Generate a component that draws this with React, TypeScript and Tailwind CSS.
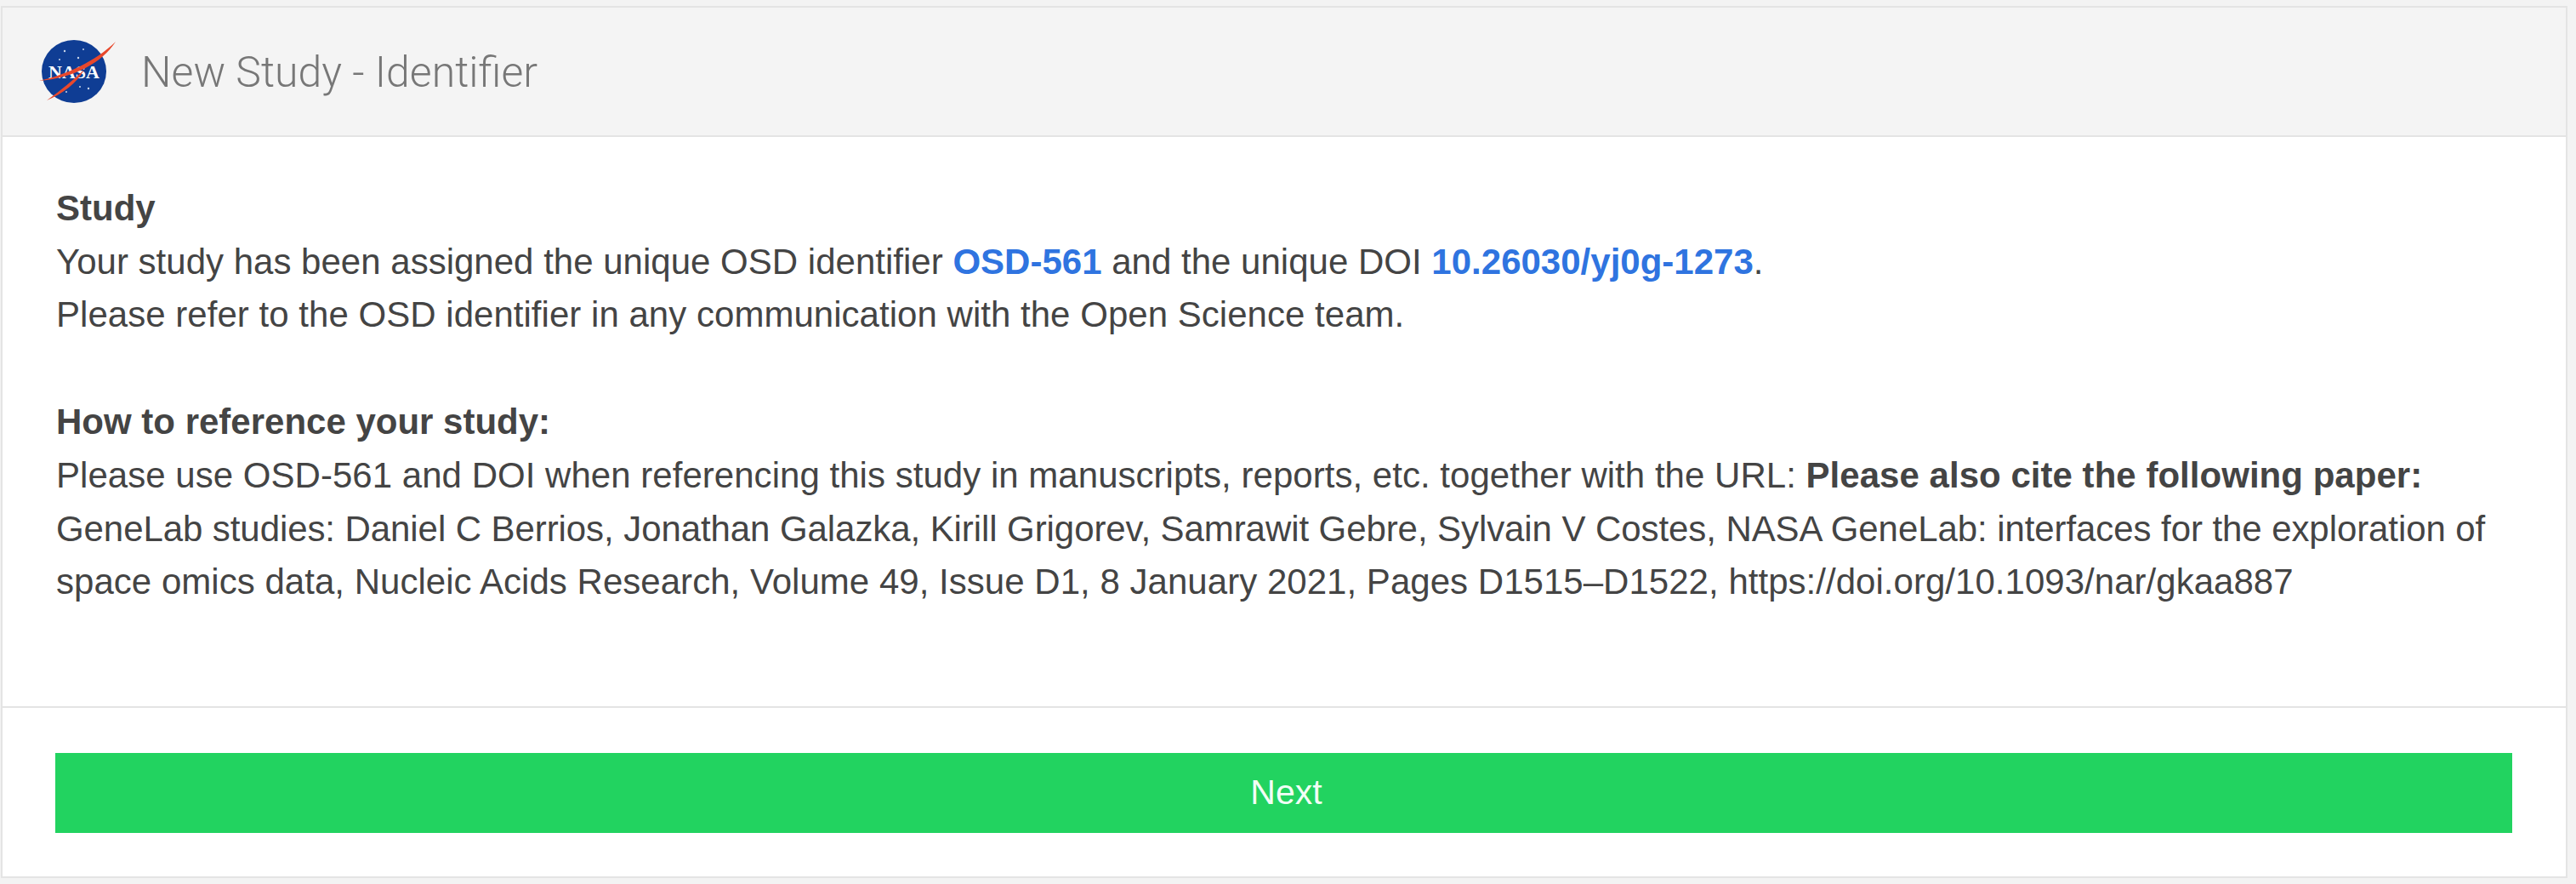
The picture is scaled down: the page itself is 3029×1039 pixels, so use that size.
const App = () => {
  return (
    <div className="w-[3029px] h-[1039px] bg-[#f3f3f3] pt-[7px] pl-px pr-[10px] pb-[7px] font-['Liberation_Sans',Arial,sans-serif]">
      <div className="h-full flex flex-col bg-white border-2 border-[#e4e4e4]">
        <div className="h-[152px] shrink-0 flex items-center pl-[43px] bg-[#f4f4f4] border-b-2 border-[#e4e4e4]">
          <svg width="92" height="76" viewBox="0 0 92 76" className="shrink-0">
            <ellipse cx="41" cy="38" rx="38" ry="37" fill="#0f3d94" />
            <g fill="#c9d4e8">
              <circle cx="30" cy="14" r="1.2" />
              <circle cx="52" cy="12" r="1" />
              <circle cx="24" cy="24" r="1" />
              <circle cx="46" cy="22" r="1.2" />
              <circle cx="58" cy="58" r="1.2" />
              <circle cx="32" cy="62" r="1" />
              <circle cx="48" cy="56" r="1" />
            </g>
            <text x="41" y="46" textAnchor="middle" fontSize="22" fontWeight="700" fill="#fff" fontFamily="Liberation Serif, serif">NASA</text>
            <path d="M0 49 C32 42 66 26 90 3 C74 28 40 46 0 49Z" fill="#e8482c" />
            <path d="M9 72 C26 60 40 48 53 36 C44 52 28 64 9 72Z" fill="#e8482c" />
          </svg>
          <h1 className="ml-[28px] pt-[2px] text-[50px] font-light text-[#777] font-['Roboto',sans-serif]">New Study - Identifier</h1>
        </div>
        <div className="flex-1 pt-[53px] px-[63px] text-[42px] leading-[62.7px] text-[#444]">
          <p className="font-bold">Study</p>
          <p className="tracking-[0.01px]">
            Your study has been assigned the unique OSD identifier <a className="font-bold text-[#2f74e0]">OSD-561</a> and the unique DOI <a className="font-bold text-[#2f74e0]">10.26030/yj0g-1273</a>.
          </p>
          <p className="tracking-[0.03px]">Please refer to the OSD identifier in any communication with the Open Science team.</p>
          <p className="mt-[63px] font-bold">How to reference your study:</p>
          <p className="tracking-[0.03px]">
            Please use OSD-561 and DOI when referencing this study in manuscripts, reports, etc. together with the URL: <b>Please also cite the following paper:</b>
          </p>
          <p className="tracking-[-0.08px]">GeneLab studies: Daniel C Berrios, Jonathan Galazka, Kirill Grigorev, Samrawit Gebre, Sylvain V Costes, NASA GeneLab: interfaces for the exploration of</p>
          <p className="tracking-[0.03px]">space omics data, Nucleic Acids Research, Volume 49, Issue D1, 8 January 2021, Pages D1515–D1522, https://doi.org/10.1093/nar/gkaa887</p>
        </div>
        <div className="h-[200px] shrink-0 border-t-2 border-[#e4e4e4] pl-[62px] pr-[63px] pt-[53px]">
          <button className="w-full h-[94px] pl-[6px] bg-[#22d360] text-[#f2fdf5] text-[41px] text-center">Next</button>
        </div>
      </div>
    </div>
  );
};

export default App;
